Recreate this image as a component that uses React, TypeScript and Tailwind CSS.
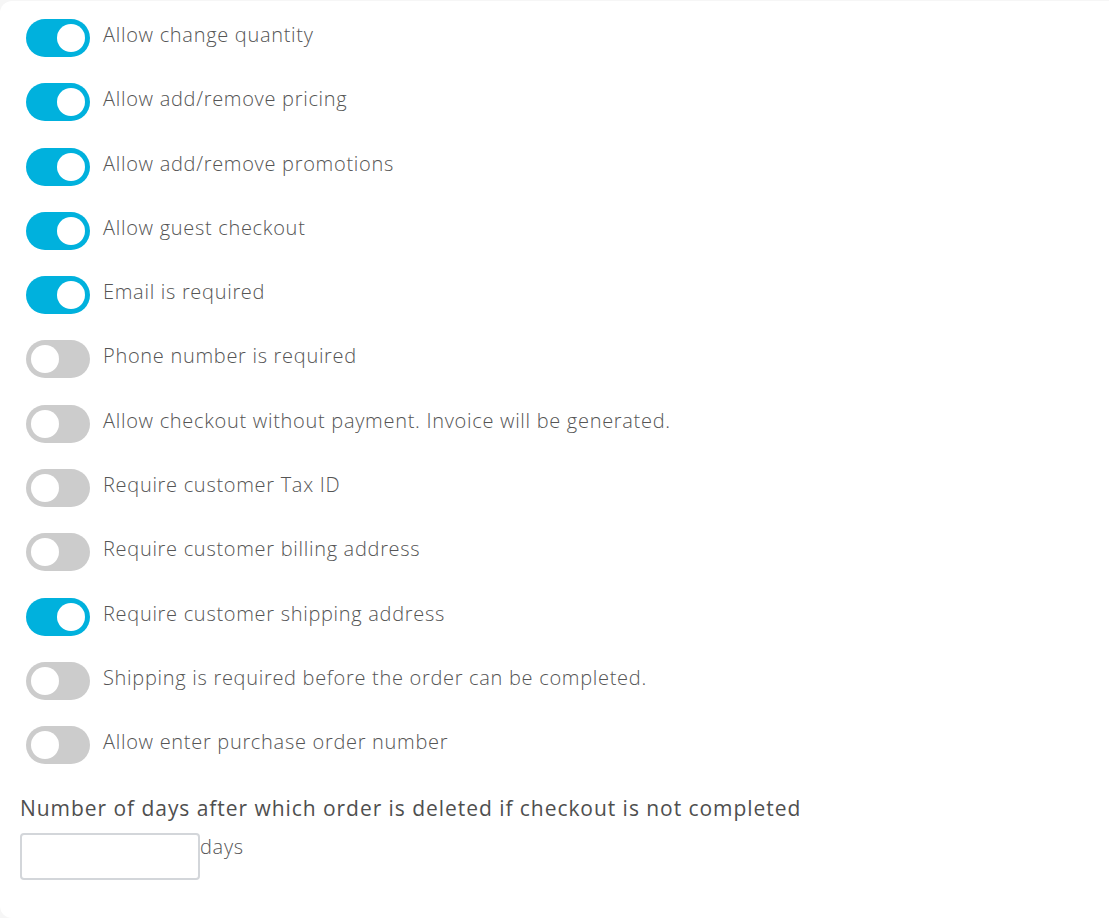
import { useState } from 'react';

const settings = [
  { label: 'Allow change quantity', on: true },
  { label: 'Allow add/remove pricing', on: true },
  { label: 'Allow add/remove promotions', on: true },
  { label: 'Allow guest checkout', on: true },
  { label: 'Email is required', on: true },
  { label: 'Phone number is required', on: false },
  { label: 'Allow checkout without payment. Invoice will be generated.', on: false },
  { label: 'Require customer Tax ID', on: false },
  { label: 'Require customer billing address', on: false },
  { label: 'Require customer shipping address', on: true },
  { label: 'Shipping is required before the order can be completed.', on: false },
  { label: 'Allow enter purchase order number', on: false },
];

function Toggle({ on, onClick }: { on: boolean; onClick: () => void }) {
  return (
    <button
      type="button"
      onClick={onClick}
      className={`relative shrink-0 w-[64px] h-[38px] rounded-full ${on ? 'bg-[#00b1dd]' : 'bg-[#cccccc]'}`}
    >
      <span
        className={`absolute top-[5px] w-[28px] h-[28px] rounded-full bg-white ${on ? 'left-[31px]' : 'left-[5px]'}`}
      />
    </button>
  );
}

export default function App() {
  const [values, setValues] = useState(settings.map((s) => s.on));

  return (
    <div className="min-h-screen bg-[#f6f6f6] pt-px" style={{ fontFamily: '"Open Sans", "Liberation Sans", sans-serif' }}>
      <div className="bg-white rounded-l-xl min-h-[917px] pl-[20px] pt-[18px] pb-8">
        <div className="flex flex-col gap-[26.3px] pl-[6px]">
          {settings.map((s, i) => (
            <div key={s.label} className="flex items-start gap-[13px]">
              <Toggle
                on={values[i]}
                onClick={() => setValues((v) => v.map((x, j) => (j === i ? !x : x)))}
              />
              <span className="text-[20px] leading-[32px] font-light tracking-[0.7px] text-[#555555]">{s.label}</span>
            </div>
          ))}
        </div>
        <h3 className="mt-[30px] text-[21px] leading-[28px] font-medium tracking-[0.95px] text-[#4f4f4f]">
          Number of days after which order is deleted if checkout is not completed
        </h3>
        <div className="flex items-start mt-[11px]">
          <input
            type="text"
            className="w-[180px] h-[47px] border-2 border-[#d3d6da] rounded-[4px] outline-none px-2"
          />
          <span className="text-[20px] leading-[28px] font-light tracking-[0.7px] text-[#555555]">days</span>
        </div>
      </div>
    </div>
  );
}
